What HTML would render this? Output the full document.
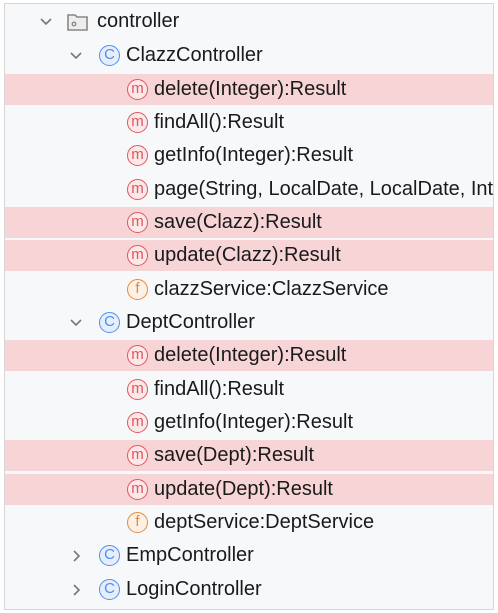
<!DOCTYPE html><html><head><style>
body{margin:0;width:498px;height:613px;background:#fff;overflow:hidden;font-family:"Liberation Sans",sans-serif;}
.frame{position:absolute;left:4px;top:3px;width:488px;height:605px;border:1px solid #d6d6d6;background:#f7f8fa;overflow:hidden}
.row{position:absolute;left:0;width:488px;height:31px;}
.hl{background:#f7d4d6}
.t{position:absolute;top:4px;font-size:20px;color:#1a1a1a;white-space:nowrap}
.ic{position:absolute;top:5px;width:19px;height:19px;border-radius:50%;border:1.8px solid;font-size:15px;line-height:18px;text-align:center;box-sizing:content-box}
.m{border-color:#e0555e;color:#e0555e;background:#fce8e9}
.c{border-color:#4f8ef0;color:#4f8ef0;background:#e6eefc}
.f{border-color:#e8893a;color:#e8893a;background:#fdf0e4}
svg{position:absolute}
</style></head><body><div class="frame">
<div class="row" style="top:2px"><svg style="left:34px;top:11px" width="14" height="10"><path d="M2 2 L7 7 L12 2" fill="none" stroke="#777" stroke-width="1.6"/></svg><svg style="left:61px;top:5px" width="24" height="22"><path d="M2 4 H9 L11 6 H21 V19 H2 Z" fill="#eee" stroke="#888" stroke-width="1.6"/><circle cx="8" cy="13" r="1.8" fill="none" stroke="#888" stroke-width="1.3"/></svg><span class="t" style="left:92px">controller</span></div>
<div class="row" style="top:36px"><svg style="left:64px;top:11px" width="14" height="10"><path d="M2 2 L7 7 L12 2" fill="none" stroke="#777" stroke-width="1.6"/></svg><span class="ic c" style="left:94px">C</span><span class="t" style="left:121px">ClazzController</span></div>
<div class="row hl" style="top:70px"><span class="ic m" style="left:122px">m</span><span class="t" style="left:149px">delete(Integer):Result</span></div>
<div class="row" style="top:103px"><span class="ic m" style="left:122px">m</span><span class="t" style="left:149px">findAll():Result</span></div>
<div class="row" style="top:136px"><span class="ic m" style="left:122px">m</span><span class="t" style="left:149px">getInfo(Integer):Result</span></div>
<div class="row" style="top:170px"><span class="ic m" style="left:122px">m</span><span class="t" style="left:149px">page(String, LocalDate, LocalDate, Integer, Integer):Result</span></div>
<div class="row hl" style="top:203px"><span class="ic m" style="left:122px">m</span><span class="t" style="left:149px">save(Clazz):Result</span></div>
<div class="row hl" style="top:236px"><span class="ic m" style="left:122px">m</span><span class="t" style="left:149px">update(Clazz):Result</span></div>
<div class="row" style="top:270px"><span class="ic f" style="left:122px">f</span><span class="t" style="left:149px">clazzService:ClazzService</span></div>
<div class="row" style="top:303px"><svg style="left:64px;top:11px" width="14" height="10"><path d="M2 2 L7 7 L12 2" fill="none" stroke="#777" stroke-width="1.6"/></svg><span class="ic c" style="left:94px">C</span><span class="t" style="left:121px">DeptController</span></div>
<div class="row hl" style="top:336px"><span class="ic m" style="left:122px">m</span><span class="t" style="left:149px">delete(Integer):Result</span></div>
<div class="row" style="top:370px"><span class="ic m" style="left:122px">m</span><span class="t" style="left:149px">findAll():Result</span></div>
<div class="row" style="top:403px"><span class="ic m" style="left:122px">m</span><span class="t" style="left:149px">getInfo(Integer):Result</span></div>
<div class="row hl" style="top:436px"><span class="ic m" style="left:122px">m</span><span class="t" style="left:149px">save(Dept):Result</span></div>
<div class="row hl" style="top:470px"><span class="ic m" style="left:122px">m</span><span class="t" style="left:149px">update(Dept):Result</span></div>
<div class="row" style="top:503px"><span class="ic f" style="left:122px">f</span><span class="t" style="left:149px">deptService:DeptService</span></div>
<div class="row" style="top:536px"><svg style="left:67px;top:9px" width="10" height="14"><path d="M2 2 L7 7 L2 12" fill="none" stroke="#777" stroke-width="1.6"/></svg><span class="ic c" style="left:94px">C</span><span class="t" style="left:121px">EmpController</span></div>
<div class="row" style="top:570px"><svg style="left:67px;top:9px" width="10" height="14"><path d="M2 2 L7 7 L2 12" fill="none" stroke="#777" stroke-width="1.6"/></svg><span class="ic c" style="left:94px">C</span><span class="t" style="left:121px">LoginController</span></div>
</div></body></html>
